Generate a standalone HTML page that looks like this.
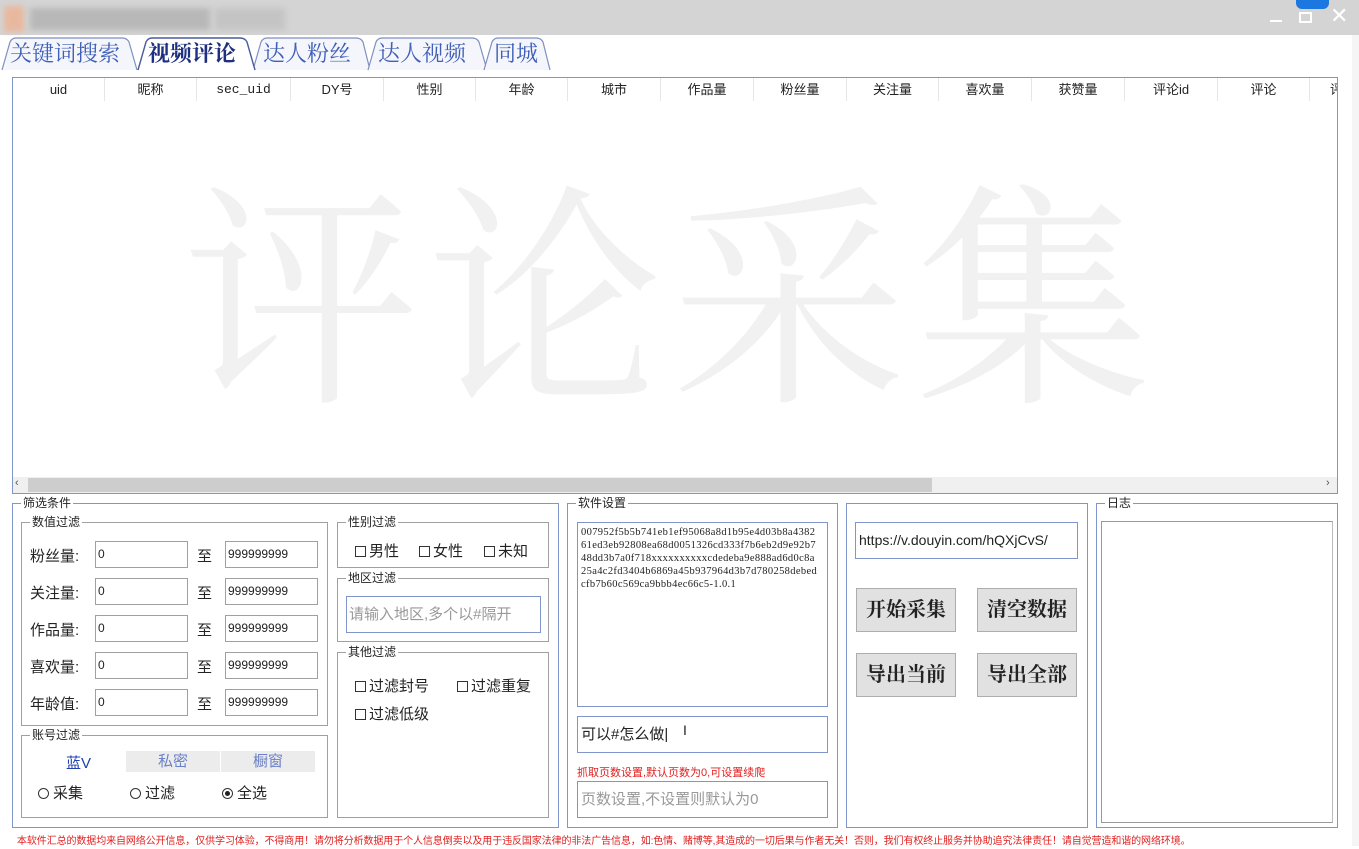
<!DOCTYPE html>
<html><head><meta charset="utf-8">
<style>
*{margin:0;padding:0;box-sizing:border-box}
body{width:1359px;height:846px;background:#fff;position:relative;overflow:hidden;font-family:"Liberation Sans","Noto Sans CJK SC",sans-serif;font-size:14px;color:#222}
.a{position:absolute}
.tab{position:absolute;top:38px;height:32px;font-family:"Liberation Serif","Noto Serif CJK SC",serif;font-size:22px;color:#3f5fb8;line-height:32px;white-space:nowrap}
.th{position:absolute;top:78px;height:23px;line-height:23px;text-align:center;font-size:13px;color:#222;border-right:1px solid #e6e6e6}
.grp{position:absolute;border:1px solid #7f95cc}
.grp2{position:absolute;border:1px solid #a0a0a0}
.lg{position:absolute;top:-8px;left:8px;background:#fff;padding:0 2px;font-size:12px;line-height:14px;color:#222}
.inp{position:absolute;border:1px solid #a0a0a0;background:#fff;height:27px;font-size:12px;line-height:25px;padding-left:2px}
.lbl{position:absolute;font-size:15px}
.cb{display:inline-block;width:11px;height:11px;border:1px solid #333;vertical-align:-1px;margin-right:3px}
.rd{display:inline-block;width:11px;height:11px;border:1px solid #333;border-radius:50%;vertical-align:-1px;margin-right:4px;position:relative}
.btn{position:absolute;width:100px;height:44px;background:#e1e1e1;border:1px solid #adadad;font-family:"Liberation Serif","Noto Serif CJK SC",serif;font-size:20px;font-weight:bold;text-align:center;line-height:42px;color:#222}
</style></head><body>
<div class="a" style="left:0;top:0;width:1359px;height:35px;background:#d4d4d4"></div>
<div class="a" style="left:4px;top:6px;width:20px;height:26px;background:#e8b89e;filter:blur(3px)"></div>
<div class="a" style="left:30px;top:8px;width:180px;height:22px;background:#b8b8b8;filter:blur(3px)"></div>
<div class="a" style="left:215px;top:8px;width:70px;height:22px;background:#c4c4c4;filter:blur(3px)"></div>
<div class="a" style="left:1296px;top:0;width:33px;height:9px;background:#1a78e0;border-radius:0 0 6px 6px"></div>
<div class="a" style="left:1270px;top:20px;width:12px;height:2px;background:#fff"></div>
<div class="a" style="left:1299px;top:12px;width:13px;height:11px;border:2px solid #fff"></div>
<div class="a" style="left:1330px;top:3px;color:#fff;font-size:22px;line-height:26px">✕</div>
<svg class="a" style="left:0;top:36px" width="560" height="36">
<g fill="#f4f6fb" stroke="#7f90c0" stroke-width="1.2">
<path d="M2 34 L10 6 Q12 2 16 2 L122 2 Q127 2 129 6 L137 34"/>
<path d="M253 34 L261 6 Q263 2 267 2 L356 2 Q361 2 363 6 L370 34"/>
<path d="M368 34 L376 6 Q378 2 382 2 L472 2 Q477 2 479 6 L487 34"/>
<path d="M484 34 L492 6 Q494 2 498 2 L536 2 Q541 2 543 6 L550 34"/>
</g>
<path d="M138 34 L146 6 Q148 2 152 2 L240 2 Q245 2 247 6 L255 34" fill="#fff" stroke="#4a5a9a" stroke-width="1.4"/>
</svg>
<div class="tab" style="left:10px">关键词搜索</div>
<div class="tab" style="left:148px;color:#1e2f80;font-weight:bold">视频评论</div>
<div class="tab" style="left:263px">达人粉丝</div>
<div class="tab" style="left:378px">达人视频</div>
<div class="tab" style="left:494px">同城</div>
<div class="a" style="left:12px;top:77px;width:1326px;height:417px;border:1px solid #7f95cc;overflow:hidden">
<div class="a" style="left:170px;top:98px;font-family:'Liberation Serif','Noto Serif CJK SC',serif;font-size:236px;line-height:260px;color:#f1f1f1;letter-spacing:8px;white-space:nowrap">评论采集</div>
</div>
<div class="th" style="left:13px;width:92px">uid</div>
<div class="th" style="left:105px;width:92px">昵称</div>
<div class="th" style="left:197px;width:94px;font-family:'Liberation Mono',monospace">sec_uid</div>
<div class="th" style="left:291px;width:93px">DY号</div>
<div class="th" style="left:384px;width:92px">性别</div>
<div class="th" style="left:476px;width:92px">年龄</div>
<div class="th" style="left:568px;width:93px">城市</div>
<div class="th" style="left:661px;width:93px">作品量</div>
<div class="th" style="left:754px;width:93px">粉丝量</div>
<div class="th" style="left:847px;width:92px">关注量</div>
<div class="th" style="left:939px;width:93px">喜欢量</div>
<div class="th" style="left:1032px;width:93px">获赞量</div>
<div class="th" style="left:1125px;width:93px">评论id</div>
<div class="th" style="left:1218px;width:92px">评论</div>
<div class="th" style="left:1310px;width:27px;border:none;overflow:hidden;text-align:left;padding-left:20px">评</div>
<div class="a" style="left:13px;top:477px;width:1324px;height:16px;background:#f0f0f0"></div>
<div class="a" style="left:28px;top:478px;width:904px;height:14px;background:#cdcdcd"></div>
<div class="a" style="left:15px;top:477px;font-size:11px;color:#555">‹</div>
<div class="a" style="left:1326px;top:477px;font-size:11px;color:#555">›</div>
<div class="a" style="left:1352px;top:35px;width:7px;height:811px;background:#f5f5f5"></div>

<div class="grp" style="left:12px;top:503px;width:547px;height:325px"><span class="lg">筛选条件</span></div>
<div class="grp2" style="left:21px;top:522px;width:307px;height:204px"><span class="lg">数值过滤</span></div>
<div class="lbl" style="left:30px;top:545px">粉丝量:</div>
<div class="lbl" style="left:30px;top:582px">关注量:</div>
<div class="lbl" style="left:30px;top:619px">作品量:</div>
<div class="lbl" style="left:30px;top:656px">喜欢量:</div>
<div class="lbl" style="left:30px;top:693px">年龄值:</div>
<div class="inp" style="left:95px;top:541px;width:93px">0</div>
<div class="inp" style="left:95px;top:578px;width:93px">0</div>
<div class="inp" style="left:95px;top:615px;width:93px">0</div>
<div class="inp" style="left:95px;top:652px;width:93px">0</div>
<div class="inp" style="left:95px;top:689px;width:93px">0</div>
<div class="lbl" style="left:197px;top:545px">至</div>
<div class="lbl" style="left:197px;top:582px">至</div>
<div class="lbl" style="left:197px;top:619px">至</div>
<div class="lbl" style="left:197px;top:656px">至</div>
<div class="lbl" style="left:197px;top:693px">至</div>
<div class="inp" style="left:225px;top:541px;width:93px">999999999</div>
<div class="inp" style="left:225px;top:578px;width:93px">999999999</div>
<div class="inp" style="left:225px;top:615px;width:93px">999999999</div>
<div class="inp" style="left:225px;top:652px;width:93px">999999999</div>
<div class="inp" style="left:225px;top:689px;width:93px">999999999</div>

<div class="grp2" style="left:21px;top:735px;width:307px;height:83px"><span class="lg">账号过滤</span></div>
<div class="lbl" style="left:66px;top:752px;color:#2040b0">蓝V</div>
<div class="a" style="left:126px;top:751px;width:94px;height:21px;background:#ececec;text-align:center;line-height:21px;color:#6a80c8;font-size:15px">私密</div>
<div class="a" style="left:221px;top:751px;width:94px;height:21px;background:#ececec;text-align:center;line-height:21px;color:#6a80c8;font-size:15px">橱窗</div>
<div class="lbl" style="left:38px;top:782px"><span class="rd"></span>采集</div>
<div class="lbl" style="left:130px;top:782px"><span class="rd"></span>过滤</div>
<div class="lbl" style="left:222px;top:782px"><span class="rd"><span style="position:absolute;left:2px;top:2px;width:5px;height:5px;border-radius:50%;background:#222"></span></span>全选</div>

<div class="grp2" style="left:337px;top:522px;width:212px;height:46px"><span class="lg">性别过滤</span></div>
<div class="lbl" style="left:355px;top:540px"><span class="cb"></span>男性</div>
<div class="lbl" style="left:419px;top:540px"><span class="cb"></span>女性</div>
<div class="lbl" style="left:484px;top:540px"><span class="cb"></span>未知</div>
<div class="grp2" style="left:337px;top:578px;width:212px;height:64px"><span class="lg">地区过滤</span></div>
<div class="a" style="left:346px;top:596px;width:195px;height:37px;border:1px solid #7f95cc;color:#999;font-size:15px;line-height:35px;padding-left:2px">请输入地区,多个以#隔开</div>
<div class="grp2" style="left:337px;top:652px;width:212px;height:166px"><span class="lg">其他过滤</span></div>
<div class="lbl" style="left:355px;top:675px"><span class="cb"></span>过滤封号</div>
<div class="lbl" style="left:457px;top:675px"><span class="cb"></span>过滤重复</div>
<div class="lbl" style="left:355px;top:703px"><span class="cb"></span>过滤低级</div>

<div class="grp" style="left:567px;top:503px;width:271px;height:325px"><span class="lg">软件设置</span></div>
<div class="a" style="left:577px;top:522px;width:251px;height:185px;border:1px solid #7f95cc;font-family:'Liberation Serif',serif;font-size:10.5px;line-height:13px;padding:3px 3px;color:#222;white-space:pre;letter-spacing:0.35px">007952f5b5b741eb1ef95068a8d1b95e4d03b8a4382
61ed3eb92808ea68d0051326cd333f7b6eb2d9e92b7
48dd3b7a0f718xxxxxxxxxxcdedeba9e888ad6d0c8a
25a4c2fd3404b6869a45b937964d3b7d780258debed
cfb7b60c569ca9bbb4ec66c5-1.0.1</div>
<div class="a" style="left:577px;top:716px;width:251px;height:37px;border:1px solid #7f95cc;font-size:15px;line-height:35px;padding-left:3px">可以#怎么做|<span style="position:absolute;left:105px;top:-4px;font-size:14px">I</span></div>
<div class="a" style="left:577px;top:764px;font-size:11px;color:#e02020">抓取页数设置,默认页数为0,可设置续爬</div>
<div class="a" style="left:577px;top:781px;width:251px;height:37px;border:1px solid #7f95cc;font-size:15px;line-height:35px;padding-left:3px;color:#999">页数设置,不设置则默认为0</div>

<div class="grp" style="left:846px;top:503px;width:242px;height:325px"></div>
<div class="a" style="left:855px;top:522px;width:223px;height:37px;border:1px solid #7f95cc;font-size:14px;line-height:35px;padding-left:3px">https://v.douyin.com/hQXjCvS/</div>
<div class="btn" style="left:856px;top:588px">开始采集</div>
<div class="btn" style="left:977px;top:588px">清空数据</div>
<div class="btn" style="left:856px;top:653px">导出当前</div>
<div class="btn" style="left:977px;top:653px">导出全部</div>

<div class="grp" style="left:1096px;top:503px;width:242px;height:325px"><span class="lg">日志</span></div>
<div class="a" style="left:1101px;top:521px;width:232px;height:302px;border:1px solid #999;border-right-color:#bbb"></div>

<div class="a" style="left:17px;top:835px;font-size:10px;line-height:14px;color:#e02020;white-space:nowrap;letter-spacing:-0.1px">本软件汇总的数据均来自网络公开信息，仅供学习体验，不得商用！请勿将分析数据用于个人信息倒卖以及用于违反国家法律的非法广告信息，如:色情、赌博等,其造成的一切后果与作者无关！否则，我们有权终止服务并协助追究法律责任！请自觉营造和谐的网络环境。</div>
</body></html>
